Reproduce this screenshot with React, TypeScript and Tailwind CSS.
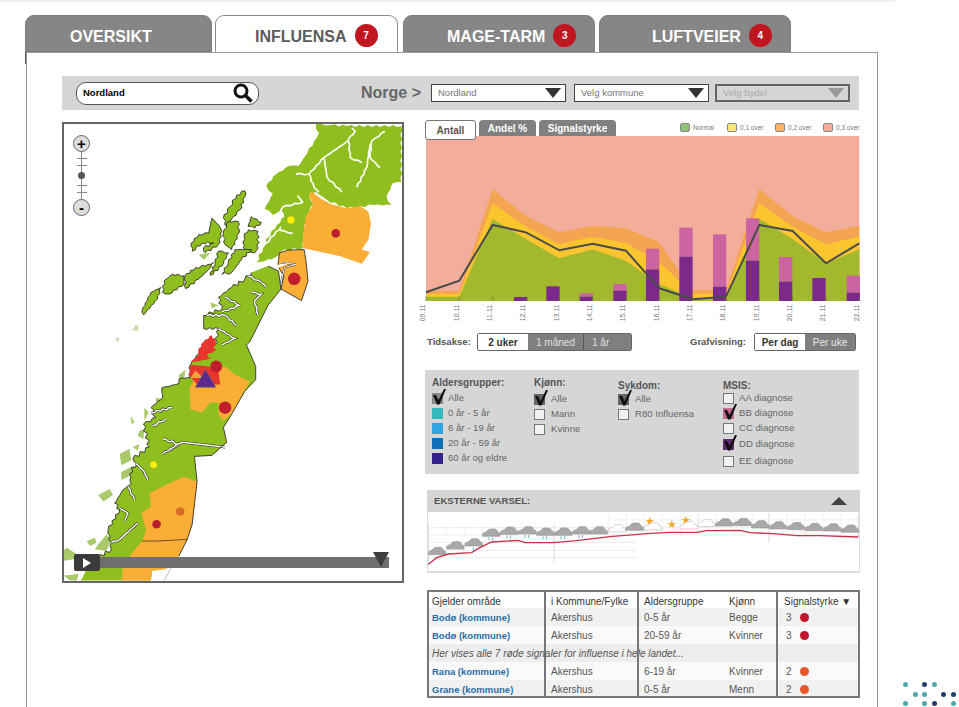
const tabs = [
  { label: "OVERSIKT", width: "w-[187px]", pad: "pl-[44px]", margin: "" },
  { label: "INFLUENSA", badge: "7", width: "w-[183px]", pad: "pl-[39px]", margin: "ml-[3px]", active: true },
  { label: "MAGE-TARM", badge: "3", width: "w-[192px]", pad: "pl-[43px]", margin: "ml-[5px]" },
  { label: "LUFTVEIER", badge: "4", width: "w-[192px]", pad: "pl-[52px]", margin: "ml-[4px]" },
];

const Tab = ({ label, badge, width, pad, margin, active }: { label: string; badge?: string; width: string; pad: string; margin: string; active?: boolean }) => (
  <div
    className={`${width} ${pad} ${margin} flex h-[37px] items-center gap-[8px] rounded-t-[9px] border pt-[6px] text-[16px] font-bold ${
      active ? "relative z-10 -mb-px border-[#8a8a8a] border-b-white bg-white text-[#5c5c5c]" : "border-[#7d7d7d] bg-[#868686] text-white"
    }`}
  >
    <span>{label}</span>
    {badge && (
      <span className="-mt-[2px] flex h-[23px] w-[23px] items-center justify-center rounded-full bg-[#c0161f] text-[10px] font-bold text-white">
        {badge}
      </span>
    )}
  </div>
);

const DownTriangle = ({ className }: { className: string }) => <span className={`h-0 w-0 border-x-[8px] border-t-[10px] border-x-transparent ${className}`} />;

const Select = ({ label, disabled }: { label: string; disabled?: boolean }) => (
  <div
    className={`flex h-[18px] w-[135px] items-center justify-between pl-[6px] pr-[4px] text-[9.5px] ${
      disabled ? "border-2 border-[#666] bg-[#d6d6d6] text-[#aaa]" : "border border-[#444] bg-white text-[#777]"
    }`}
  >
    <span>{label}</span>
    <DownTriangle className={disabled ? "border-t-[#999]" : "border-t-[#333]"} />
  </div>
);

const greenArea = [545, 545, 312, 372, 430, 403, 438, 508, 550, 555, 312, 372, 445, 403];
const yellowArea = [537, 537, 265, 335, 388, 365, 385, 440, 537, 537, 265, 335, 388, 365];
const orangeArea = [527, 527, 222, 303, 352, 332, 340, 382, 525, 525, 222, 303, 352, 332];
const trendLine = [532, 497, 330, 352, 406, 386, 407, 520, 553, 545, 330, 348, 445, 385];
const bars = [
  { x: 282, dark: 546 },
  { x: 379, dark: 514 },
  { x: 479, dark: 545, pink: 535 },
  { x: 580, dark: 527, pink: 507 },
  { x: 678, dark: 463, pink: 401 },
  { x: 778, dark: 425, pink: 338 },
  { x: 879, dark: 515, pink: 358 },
  { x: 978, dark: 437, pink: 310 },
  { x: 1077, dark: 500, pink: 426 },
  { x: 1177, dark: 489 },
  { x: 1280, dark: 533, pink: 482 },
];
const dates = ["09.11", "10.11", "11.11", "12.11", "13.11", "14.11", "15.11", "16.11", "17.11", "18.11", "19.11", "20.11", "21.11", "22.11"];

const tickX = (i: number) => 18 + i * 100;
const areaPoints = (ys: number[]) => `18,558 ${ys.map((y, i) => `${tickX(i)},${y}`).join(" ")} 1318,558`;

const Chart = () => (
  <svg width="434" height="186" className="block overflow-visible">
    <g transform="scale(0.3333) translate(-18 -63)">
      <rect x="18" y="63" width="1300" height="495" fill="#f2ae9b" />
      <polygon points={areaPoints(orangeArea)} fill="#f4a552" />
      <polygon points={areaPoints(yellowArea)} fill="#fbc52f" />
      <polygon points={areaPoints(greenArea)} fill="#a2b92f" />
      {bars.map((b) => (
        <g key={b.x}>
          {b.pink && <rect x={b.x} y={b.pink} width="40" height={b.dark - b.pink} fill="#cb64a0" />}
          <rect x={b.x} y={b.dark} width="40" height={558 - b.dark} fill="#7b2a8c" />
        </g>
      ))}
      <polyline points={trendLine.map((y, i) => `${tickX(i)},${y}`).join(" ")} fill="none" stroke="#4a4a4a" strokeWidth="6" />
      {dates.map((d, i) => (
        <g key={d}>
          <line x1={tickX(i)} x2={tickX(i)} y1="544" y2="558" stroke="#6b7a20" strokeWidth="2" />
          <text transform={`translate(${tickX(i) - 2} 619) rotate(-90)`} fontSize="21" fill="#777">
            {d}
          </text>
        </g>
      ))}
    </g>
  </svg>
);

// breaks the straight edges up so the coast looks jagged
const rough = (points: string, amp: number, step = 13, closed = true) => {
  const pts = points.split(" ").map((p) => p.split(",").map(Number));
  const out: string[] = [];
  const count = closed ? pts.length : pts.length - 1;
  for (let i = 0; i < count; i++) {
    const [x1, y1] = pts[i];
    const [x2, y2] = pts[(i + 1) % pts.length];
    const len = Math.hypot(x2 - x1, y2 - y1);
    const n = Math.max(1, Math.round(len / step));
    for (let k = 0; k < n; k++) {
      const t = k / n;
      const wobble = k === 0 ? 0 : Math.sin((x1 + k) * 12.9 + (y1 + k) * 78.2) * amp;
      out.push(`${(x1 + (x2 - x1) * t + ((y2 - y1) / len) * wobble).toFixed(1)},${(y1 + (y2 - y1) * t - ((x2 - x1) / len) * wobble).toFixed(1)}`);
    }
  }
  if (!closed) out.push(pts[pts.length - 1].join(","));
  return out.join(" ");
};

const northFjords = [
  "725,171 765,171 810,121 875,76 905,41 895,31",
  "810,121 820,181 865,226",
  "765,171 780,211 795,226",
  "950,81 940,151 910,211",
  "885,71 890,121 925,136",
  "950,121 980,151",
  "995,41 955,71 950,121",
  "730,236 745,256 685,271 670,311",
  "680,331 635,381",
  "675,341 715,351",
];
const lofoten = [
  "570,222 545,235 525,270 505,305 515,330 535,300 555,280 570,240",
  "470,305 490,325 500,345 490,385 450,410 445,395 475,380 440,380 410,405 408,380 430,355 460,350",
  "520,315 550,315 552,350 530,400 510,385 505,350",
  "580,340 610,345 610,395 600,410 565,395 568,360",
  "540,400 590,400 560,430 530,470 500,475 520,440",
  "490,405 520,410 500,450 465,478 480,440",
  "475,440 460,460 430,490 390,518 388,480 420,455 450,450",
  "385,480 385,505 340,535 320,530 325,495 350,475",
  "315,515 305,550 262,598 258,585 285,530",
  "590,300 620,318 600,335 580,330",
];
const lightIslands = [
  "430,415 465,410 445,432",
  "465,560 490,570 470,578",
  "520,550 550,545 540,562",
  "5,1325 30,1305 60,1325 50,1340 20,1345",
  "90,1285 115,1275 120,1290 100,1300",
  "125,1295 150,1265 165,1280 150,1315 115,1310",
  "125,1145 160,1127 170,1145 140,1165",
  "190,1020 220,1005 225,1040 195,1055",
  "195,1075 235,1055 225,1085 195,1100",
  "230,1000 250,990 245,1010",
  "250,950 265,945 262,975 245,965",
  "265,880 278,895 265,920",
  "300,850 325,855 300,865",
  "295,870 340,870 320,885",
  "225,905 235,925 225,930",
  "370,780 390,765 385,800 372,805",
  "20,1390 65,1385 60,1405 40,1405",
];
const coastFjords = [
  "580,480 620,500 635,515",
  "590,530 620,535 600,555 610,598",
  "500,590 555,570 510,545",
  "455,600 510,600 545,630",
  "490,640 540,670 500,690",
  "510,1000 380,985 340,1010",
  "320,975 370,990 320,1020",
  "285,895 350,880",
  "290,935 330,915",
  "240,1050 265,1075 275,1100",
  "215,1120 235,1160",
  "190,1185 215,1200 205,1225",
  "245,1230 190,1280 165,1290",
];
const eastCoast = "640,450 672,465 680,520 640,570 620,610 585,680 575,690 603,755 603,795 570,830 530,900 505,940 515,985 470,1025 417,1028 425,1105 410,1235 395,1280 370,1330";
const westCoast = "100,1350 165,1310 155,1250 190,1190 175,1170 200,1130 225,1110 220,1080 240,1050 230,1035 280,1000 262,930 300,910 285,880 320,850 318,820 360,810 380,790 405,790 405,750 430,715 480,690 490,640 445,640 445,600 500,580 490,545 530,515 570,490 590,470";
const northCoast =
  "785,20 830,22 880,25 1045,25 1045,195 1020,198 1000,240 1015,265 960,265 880,275 820,250 785,225 765,235 778,262 755,300 746,395 680,405 660,425 625,437 605,440 625,395 650,345 668,325 690,300 680,280 655,295 630,276 655,231 635,206 665,171 705,146 733,146 760,106 780,71 795,46";

const MapDrawing = () => (
  <svg viewBox="62 122 342 461" className="block h-full w-full">
    <g transform="translate(55 115) scale(0.3333)">
      {lightIslands.map((p) => (
        <polygon key={p} points={p} fill="#a9c96a" />
      ))}
      <polygon points="238,630 246,628 246,648 228,645" fill="#d9d6b0" />
      <polygon points="178,668 188,668 188,678 178,678" fill="#d9d6b0" />
      <polygon points={rough(northCoast, 4)} fill="#8fbf1e" />
      {northFjords.map((p) => (
        <polyline key={p} points={rough(p, 2, 12, false)} fill="none" stroke="#fff" strokeWidth="5" />
      ))}
      <polygon
        points="770,222 800,245 830,262 880,275 920,268 945,285 953,320 945,370 925,400 950,408 925,443 860,420 790,405 745,395 748,350 755,300 778,262 765,238"
        fill="#fbae36"
      />
      {lofoten.map((p) => (
        <polygon key={p} points={rough(p, 3.5, 9)} fill="#8fbf1e" stroke="#222" strokeWidth="2.5" />
      ))}
      <polygon points={`${eastCoast} 330,1370 288,1375 285,1405 70,1405 75,1400 ${rough(westCoast, 5, 10, false)}`} fill="#8fbf1e" />
      <polyline points={rough(westCoast, 5, 10, false)} fill="none" stroke="#222" strokeWidth="2.5" />
      <polygon points="675,410 700,402 750,400 755,430 762,495 742,555 680,520 688,480 670,450" fill="#fbae36" stroke="#222" strokeWidth="2.5" />
      <polyline points="640,430 660,455 700,440" fill="none" stroke="#fff" strokeWidth="8" />
      <polyline points="680,440 725,445 690,455 680,500" fill="none" stroke="#222" strokeWidth="5" />
      <polyline points="680,440 725,445 690,455 680,500" fill="none" stroke="#fff" strokeWidth="3" />
      {coastFjords.map((p) => (
        <g key={p}>
          <polyline points={rough(p, 2.5, 10, false)} fill="none" stroke="#222" strokeWidth="7.5" />
          <polyline points={rough(p, 2.5, 10, false)} fill="none" stroke="#fff" strokeWidth="4.5" />
        </g>
      ))}
      <polygon points="510,755 540,780 585,800 565,835 530,900 505,920 490,900 490,865 465,865 440,895 405,885 402,820 425,780" fill="#fbae36" />
      <polygon points="385,1090 425,1105 410,1235 395,1280 300,1285 260,1285 270,1250 255,1200 285,1180 280,1140 330,1115" fill="#fbae36" />
      <polygon points="258,1285 395,1280 370,1330 330,1370 288,1375 285,1405 195,1405 200,1360 225,1325" fill="#fbae36" />
      <polyline points="258,1285 300,1285 395,1280" fill="none" stroke="#222" strokeWidth="2" />
      <polyline points={eastCoast} fill="none" stroke="#222" strokeWidth="2.5" />
      <polyline points="350,1360 325,1405" fill="none" stroke="#999" strokeWidth="2" />
      <polygon points={rough("470,660 482,680 475,705 430,705 445,680", 3, 9)} fill="#e8362f" />
      <polygon points={rough("430,700 450,690 485,705 455,720 470,730 425,740 405,740 430,720", 3, 9)} fill="#e8362f" />
      <polygon points="405,750 460,755 490,770 495,810 425,810 400,780" fill="#e8362f" />
      <polygon points="420,768 445,790 405,790" fill="#f3a53a" />
      <circle cx="483" cy="755" r="18" fill="#c11f2c" />
      <polygon points="450,765 482,818 420,818" fill="#5b2a8e" stroke="#666" strokeWidth="2" />
      <circle cx="510" cy="880" r="19" fill="#c11f2c" />
      <circle cx="293" cy="1053" r="11" fill="#fff200" stroke="#888" strokeWidth="1" />
      <circle cx="374" cy="1195" r="12" fill="#d96b22" stroke="#a5541c" strokeWidth="1" />
      <circle cx="302" cy="1234" r="13" fill="#b81f2e" />
      <circle cx="710" cy="310" r="12" fill="#fff200" stroke="#888" strokeWidth="1" />
      <circle cx="846" cy="351" r="13" fill="#b81f2e" />
      <circle cx="720" cy="489" r="19" fill="#c11f2c" />
    </g>
  </svg>
);

const ZoomButton = ({ label }: { label: string }) => (
  <span className="flex h-[17px] w-[17px] items-center justify-center rounded-full border border-[#666] bg-[#ddd] text-[15px] font-bold leading-none text-black">
    {label}
  </span>
);

const ZoomControl = () => (
  <div className="absolute left-[9px] top-[11px] flex w-[17px] flex-col items-center">
    <ZoomButton label="+" />
    <div className="relative flex h-[47px] w-[10px] flex-col items-center justify-between bg-[linear-gradient(#888,#888)] bg-[length:1px_100%] bg-center bg-no-repeat py-[6px]">
      <span className="h-px w-full bg-[#888]" />
      <span className="h-px w-full bg-[#888]" />
      <span className="h-[7px] w-[7px] rounded-full bg-[#555]" />
      <span className="h-px w-full bg-[#888]" />
      <span className="h-px w-full bg-[#888]" />
    </div>
    <ZoomButton label="-" />
  </div>
);

const Tick = () => (
  <svg viewBox="0 0 14 16" className="absolute -top-[4px] left-0 h-[16px] w-[14px]">
    <polygon points="1,6 4,6 6.5,11 12,0 14,0 7.5,15.5 5,15.5" fill="#111" />
  </svg>
);

const Box = ({ fill, checked }: { fill?: string; checked?: boolean }) => (
  <span className={`relative block h-[11px] w-[11px] shrink-0 ${fill ?? "border border-[#777] bg-[#f2f2f2]"}`}>{checked && <Tick />}</span>
);

const FilterRow = ({ label, fill, checked, gap = "gap-[5px]", h = "h-[15px]" }: { label: string; fill?: string; checked?: boolean; gap?: string; h?: string }) => (
  <div className={`flex ${h} items-center ${gap}`}>
    <Box fill={fill} checked={checked} />
    <span>{label}</span>
  </div>
);

const FilterTitle = ({ children, mb }: { children: string; mb: string }) => <div className={`h-[13px] text-[10px] font-bold leading-[13px] text-[#555] ${mb}`}>{children}</div>;

const Filters = () => (
  <div className="mt-[19px] flex h-[104px] w-[434px] bg-[#d6d6d6] text-[9.6px] text-[#666]">
    <div className="ml-[7px] mt-[5.5px] w-[102px]">
      <FilterTitle mb="mb-[2px]">Aldersgrupper:</FilterTitle>
      <FilterRow label="Alle" fill="bg-[#8a8a8a]" checked />
      <FilterRow label="0 år - 5 år" fill="bg-[#37b8bd]" />
      <FilterRow label="6 år - 19 år" fill="bg-[#2fa6e0]" />
      <FilterRow label="20 år - 59 år" fill="bg-[#0f6eb5]" />
      <FilterRow label="60 år og eldre" fill="bg-[#35218a]" />
    </div>
    <div className="mt-[6px] w-[84px]">
      <FilterTitle mb="mb-[2.5px]">Kjønn:</FilterTitle>
      <FilterRow label="Alle" fill="bg-[#666]" checked gap="gap-[6px]" />
      <FilterRow label="Mann" gap="gap-[6px]" />
      <FilterRow label="Kvinne" gap="gap-[6px]" />
    </div>
    <div className="mt-[8.5px] w-[105px]">
      <FilterTitle mb="mb-0">Sykdom:</FilterTitle>
      <FilterRow label="Alle" fill="bg-[#666]" checked gap="gap-[6px]" />
      <FilterRow label="R80 Influensa" gap="gap-[6px]" />
    </div>
    <div className="mt-[8.5px]">
      <FilterTitle mb="-mb-px">MSIS:</FilterTitle>
      <FilterRow label="AA diagnose" />
      <FilterRow label="BB diagnose" fill="bg-[#c46a92]" checked />
      <FilterRow label="CC diagnose" />
      <FilterRow label="DD diagnose" fill="bg-[#5c2d6c]" checked h="h-[17px]" />
      <FilterRow label="EE diagnose" h="h-[17px]" />
    </div>
  </div>
);

const greyClouds = [
  [50, 198], [105, 181], [160, 172], [213, 143], [267, 137], [321, 136], [375, 140], [429, 140], [483, 136], [535, 136],
  [643, 125], [912, 112], [967, 111], [1020, 118], [1073, 121], [1127, 123], [1181, 126], [1236, 127], [1289, 131],
];
const paleClouds = [[590, 130], [698, 124], [805, 121], [858, 114]];
const rainy = [3, 4, 5, 6, 7, 8];
const suns = [[690, 110], [798, 107], [755, 118]];

const Cloud = ({ x, y, fill, stroke }: { x: number; y: number; fill: string; stroke: string }) => (
  <path
    d={`M${x - 25},${y + 11} q-3,-12 11,-13 q7,-12 20,-9 q11,-2 14,9 q10,1 7,13 z`}
    fill={fill}
    stroke={stroke}
    strokeWidth="2"
  />
);

const Forecast = () => (
  <svg width="431" height="61" className="block">
    <g transform="scale(0.3333) translate(-24 -81)">
      {[128, 150, 172, 196, 218].map((y) => (
        <line key={y} x1="25" x2="650" y1={y} y2={y} stroke="#e4e4e4" strokeWidth="2" />
      ))}
      {[105, 128, 150].map((y) => (
        <line key={y} x1="565" x2="1315" y1={y} y2={y} stroke="#e8e8e8" strokeWidth="2" />
      ))}
      {[79, 133, 187, 241, 295, 349, 457, 511, 565, 619, 673, 727, 781, 835, 889, 943, 997, 1101, 1155, 1209, 1263].map((x) => (
        <line key={x} x1={x} x2={x} y1={x < 565 ? 125 : 85} y2="150" stroke="#e8e8e8" strokeWidth="2" />
      ))}
      <line x1="402" x2="402" y1="118" y2="232" stroke="#c4c4c4" strokeWidth="2" />
      <line x1="1047" x2="1047" y1="84" y2="172" stroke="#c4c4c4" strokeWidth="2" />
      <line x1="25" x2="25" y1="118" y2="238" stroke="#c4c4c4" strokeWidth="2" />
      <line x1="1315" x2="1315" y1="84" y2="156" stroke="#c4c4c4" strokeWidth="2" />
      {suns.map(([x, y]) => (
        <text key={x} x={x} y={y + 11} textAnchor="middle" fontSize="34" fill="#f0a92c">
          ★
        </text>
      ))}
      {paleClouds.map(([x, y]) => (
        <Cloud key={x} x={x} y={y} fill="#fff" stroke="#bdbdbd" />
      ))}
      {greyClouds.map(([x, y], i) => (
        <g key={x}>
          <Cloud x={x} y={y} fill="#a8a8a8" stroke="#999" />
          {rainy.includes(i) && (
            <g stroke="#6fb6c4" strokeWidth="3">
              <line x1={x - 6} x2={x - 6} y1={y + 14} y2={y + 23} />
              <line x1={x + 5} x2={x + 5} y1={y + 14} y2={y + 23} />
            </g>
          )}
        </g>
      ))}
      <line x1="160" x2="160" y1="186" y2="196" stroke="#6fb6c4" strokeWidth="3" />
      <polyline
        points="25,238 50,218 85,207 155,203 175,190 215,171 295,166 315,173 400,173 470,167 570,155 680,146 750,142 830,142 860,137 960,136 990,143 1060,146 1130,152 1200,152 1315,156"
        fill="none"
        stroke="#c9304a"
        strokeWidth="4"
      />
    </g>
  </svg>
);

const rows = [
  { area: "Bodø (kommune)", county: "Akershus", age: "0-5 år", sex: "Begge", level: "3", dot: "bg-[#c0172a]", band: "bg-[#f1f1f1]" },
  { area: "Bodø (kommune)", county: "Akershus", age: "20-59 år", sex: "Kvinner", level: "3", dot: "bg-[#c0172a]", band: "bg-[#fafafa]" },
  { note: "Her vises alle 7 røde signaler for influense i hele landet...", band: "bg-[#ededed]" },
  { area: "Rana (kommune)", county: "Akershus", age: "6-19 år", sex: "Kvinner", level: "2", dot: "bg-[#e8582a]", band: "bg-[#fafafa]" },
  { area: "Grane (kommune)", county: "Akershus", age: "0-5 år", sex: "Menn", level: "2", dot: "bg-[#e8582a]", band: "bg-[#f1f1f1]" },
];

const col1 = "w-[117px] shrink-0 border-r-2 border-[#777] pl-[3px] whitespace-nowrap";
const col2 = "w-[93px] shrink-0 border-r-2 border-[#777] pl-[5px]";
const col3 = "w-[85px] shrink-0 pl-[5px]";
const col4 = "w-[54px] shrink-0 border-r-2 border-[#777] pl-[5px]";
const col5 = "flex-1 pl-[6px]";

const AlertTable = () => (
  <div className="mt-[17px] h-[108px] w-[433px] overflow-hidden border-2 border-[#777] text-[10px] text-[#555]">
    <div className="flex h-[16px] items-stretch leading-[20px] text-[#333]">
      <div className={col1}>Gjelder område</div>
      <div className={col2}>i Kommune/Fylke</div>
      <div className={col3}>Aldersgruppe</div>
      <div className={col4}>Kjønn</div>
      <div className={col5}>Signalstyrke ▼</div>
    </div>
    {rows.map((r, i) => (
      <div key={i} className={`flex h-[18px] items-stretch leading-[20px] ${r.band}`}>
        {r.note ? (
          <>
            <div className={`${col1} italic text-[#555]`}>{r.note}</div>
            <div className={col2} />
            <div className={col3} />
            <div className={col4} />
            <div className={col5} />
          </>
        ) : (
          <>
            <div className={`${col1} text-[9.5px] font-bold text-[#2a6ea8]`}>{r.area}</div>
            <div className={col2}>{r.county}</div>
            <div className={col3}>{r.age}</div>
            <div className={col4}>{r.sex}</div>
            <div className={`${col5} flex items-center gap-[8px] pl-[8px] pt-[1px]`}>
              <span>{r.level}</span>
              <span className={`h-[9px] w-[9px] rounded-full ${r.dot}`} />
            </div>
          </>
        )}
      </div>
    ))}
  </div>
);

const logoDots = [
  [905, 684, "#4aa7ae"], [924, 684, "#1f3f6e"], [934, 684, "#4aa7ae"],
  [915, 693.5, "#4aa7ae"], [924, 693.5, "#4aa7ae"], [943, 693.5, "#1f3f6e"], [953, 693.5, "#1f3f6e"],
  [905, 703, "#4aa7ae"], [924, 703, "#4aa7ae"], [934, 703, "#1f3f6e"], [953, 703, "#4aa7ae"],
] as const;

const legend = [
  { label: "Normal", color: "bg-[#8fc27a]" },
  { label: "0,1 over", color: "bg-[#fbe87a]" },
  { label: "0,2 over", color: "bg-[#f7b266]" },
  { label: "0,3 over", color: "bg-[#f2ae9b]" },
];

const App = () => {
  return (
    <div className="relative h-[707px] w-[959px] overflow-hidden bg-white font-['Liberation_Sans',sans-serif]">
      <div className="h-[2px] w-[895px] bg-[#efefef]" />
      <div className="ml-[25px] mt-[13px] flex">
        {tabs.map((t) => (
          <Tab key={t.label} {...t} />
        ))}
      </div>

      <div className="ml-[26px] h-[655px] w-[852px] border-x border-t border-[#999] pl-[35px] pt-[23px]">
        <div className="flex h-[34px] w-[797px] items-center bg-[#d6d6d6]">
          <div className="ml-[14px] flex h-[23px] w-[183px] items-center justify-between rounded-[10px] border border-[#555] bg-white pl-[6px] pr-[5px]">
            <span className="text-[9.5px] font-bold text-black">Nordland</span>
            <svg width="20" height="20" viewBox="0 0 20 20">
              <circle cx="8" cy="8" r="6" fill="none" stroke="#111" strokeWidth="3" />
              <line x1="12.5" y1="12.5" x2="18.5" y2="18.5" stroke="#111" strokeWidth="3.5" />
            </svg>
          </div>
          <span className="ml-[102px] w-[70px] text-[16px] font-bold text-[#666]">Norge &gt;</span>
          <Select label="Nordland" />
          <div className="ml-[8px]">
            <Select label="Velg kommune" />
          </div>
          <div className="ml-[6px]">
            <Select label="Velg bydel" disabled />
          </div>
        </div>

        <div className="flex items-start">
          <div className="relative mt-[12px] h-[461px] w-[342px] shrink-0 overflow-hidden border-2 border-[#666] bg-white">
            <MapDrawing />
            <ZoomControl />
            <div className="absolute left-[10px] top-[430px] flex h-[17px] w-[315px] items-center">
              <span className="z-10 flex h-[17px] w-[26px] items-center justify-center rounded-[2px] bg-[#3a3a3a]">
                <span className="h-0 w-0 border-y-[5px] border-l-[8px] border-y-transparent border-l-white" />
              </span>
              <span className="h-[11px] flex-1 bg-[#6f6f6f]" />
              <span className="absolute right-0 top-[-2px] h-0 w-0 border-x-[8px] border-t-[15px] border-x-transparent border-t-[#3f3f3f]" />
            </div>
          </div>

          <div className="ml-[21px] mt-[10px] w-[435px]">
            <div className="flex h-[16px] items-start">
              <div className="relative z-10 flex h-[20px] w-[51px] items-center justify-center rounded-[3px] border border-[#777] bg-white text-[10px] font-bold text-[#555]">
                Antall
              </div>
              <div className="ml-[3px] flex h-[16px] w-[57px] items-center justify-center rounded-t-[4px] bg-[#808080] text-[10px] font-bold text-white">
                Andel %
              </div>
              <div className="ml-[3px] flex h-[16px] w-[77px] items-center justify-center rounded-t-[4px] bg-[#808080] text-[10px] font-bold text-white">
                Signalstyrke
              </div>
              <div className="ml-[64px] mt-[3px] grid grid-cols-[47px_48px_48px_37px] text-[6.5px] text-[#777]">
                {legend.map((l) => (
                  <div key={l.label} className="flex items-center gap-[3px]">
                    <span className={`h-[9px] w-[10px] rounded-[2px] border border-[#888] ${l.color}`} />
                    <span>{l.label}</span>
                  </div>
                ))}
              </div>
            </div>
            <div className="ml-px">
              <Chart />
            </div>

            <div className="ml-[2px] mt-[11px] flex h-[18px] items-center text-[10px]">
              <span className="w-[50px] text-[9.5px] font-bold text-[#555]">Tidsakse:</span>
              <div className="flex h-[18px] w-[155px] overflow-hidden rounded-[2px] border border-[#666] text-[10px]">
                <span className="flex w-[50px] items-center justify-center bg-white font-bold text-[#333]">2 uker</span>
                <span className="flex w-[56px] items-center justify-center border-r border-[#555] bg-[#7f7f7f] text-[#e0e0e0]">1 måned</span>
                <span className="flex flex-1 items-center bg-[#7f7f7f] pl-[8px] text-[#e0e0e0]">1 år</span>
              </div>
              <span className="ml-[58px] w-[64px] text-[9.5px] font-bold text-[#555]">Grafvisning:</span>
              <div className="flex h-[18px] w-[102px] overflow-hidden rounded-[2px] border border-[#666]">
                <span className="flex w-[50px] items-center justify-center bg-white font-bold text-[#333]">Per dag</span>
                <span className="flex flex-1 items-center justify-center bg-[#7f7f7f] text-[#e8e8e8]">Per uke</span>
              </div>
            </div>

            <Filters />

            <div className="ml-[2px] mt-[16px] w-[433px]">
              <div className="flex h-[22px] items-center justify-between bg-[#d6d6d6] pl-[7px] pr-[13px]">
                <span className="text-[9.6px] font-bold text-[#555]">EKSTERNE VARSEL:</span>
                <span className="h-0 w-0 border-x-[8px] border-b-[8px] border-x-transparent border-b-[#444]" />
              </div>
              <div className="h-[61px] border-x border-b-2 border-[#ddd] bg-white">
                <Forecast />
              </div>
            </div>

            <div className="ml-[2px]">
              <AlertTable />
            </div>
          </div>
        </div>
      </div>

      <span className="absolute left-[25px] top-[52px] h-[12px] w-px bg-[#555]" />
      {logoDots.map(([x, y, color]) => (
        <span key={`${x}-${y}`} className="absolute h-[5px] w-[5px] rounded-full" style={{ left: x - 2, top: y - 2, backgroundColor: color }} />
      ))}
    </div>
  );
};

export default App;
